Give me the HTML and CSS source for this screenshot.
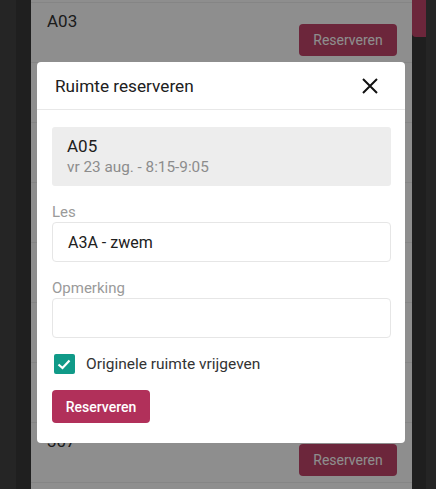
FILE: index.html
```html
<!DOCTYPE html>
<html lang="nl">
    <head>
        <meta charset="UTF-8">
        <meta name="viewport" content="width=device-width, initial-scale=1.0">
        <title>Ruimte reserveren</title>
        <link rel="stylesheet" href="styles.css">
    </head>
    <body>

        <div class="shell">
            <div class="side-strip"></div>
            <div class="gutter"></div>

            <!-- Lijst met ruimtes (achter de dialoog) -->
            <div class="page">
                <div class="room">
                    <span class="room-name">A03</span>
                    <button class="room-btn">Reserveren</button>
                </div>
                <!-- rijen die volledig achter de dialoog liggen -->
                <div class="room"></div>
                <div class="room"></div>
                <div class="room"></div>
                <div class="room"></div>
                <div class="room"></div>
                <div class="room"></div>
                <div class="room">
                    <span class="room-name">307</span>
                    <button class="room-btn">Reserveren</button>
                </div>
                <div class="room"></div>
            </div>

            <div class="gutter right">
                <div class="fab-edge"></div>
            </div>
            <div class="side-strip narrow"></div>
        </div>

        <!-- Dialoog -->
        <div class="backdrop">
            <div class="modal">
                <div class="modal-header">
                    <h2>Ruimte reserveren</h2>
                    <button class="close-btn" aria-label="Sluiten">
                        <svg width="20" height="20" viewBox="0 0 20 20">
                            <path d="M3 3 L17 17 M17 3 L3 17" stroke="#111" stroke-width="2" fill="none"/>
                        </svg>
                    </button>
                </div>
                <div class="modal-body">
                    <div class="slot">
                        <div class="slot-room">A05</div>
                        <div class="slot-time">vr 23 aug. - 8:15-9:05</div>
                    </div>

                    <label class="field-label">Les</label>
                    <div class="field">A3A - zwem</div>

                    <label class="field-label">Opmerking</label>
                    <div class="field"></div>

                    <div class="check-row">
                        <span class="checkbox">
                            <svg width="20" height="20" viewBox="0 0 20 20">
                                <path d="M4.5 10.5 L8.5 14 L15.5 6.5" stroke="#fff" stroke-width="2.2" fill="none"/>
                            </svg>
                        </span>
                        <span>Originele ruimte vrijgeven</span>
                    </div>

                    <button class="submit-btn">Reserveren</button>
                </div>
            </div>
        </div>

    </body>
</html>
```
FILE: styles.css
```css
body {
    margin: 0;
    padding: 0;
    font-family: Roboto, "Liberation Sans", sans-serif;
    height: 100vh;
    overflow: hidden;
    background-color: #444;
}

.shell {
    display: flex;
    height: 100vh;
}

.side-strip {
    width: 16px;
    background-color: #444;
}

.side-strip.narrow {
    width: 10px;
}

.gutter {
    width: 15px;
    background-color: #383838;
}

.gutter.right {
    width: 14px;
}

.fab-edge {
    height: 37px;
    background-color: #c2456a;
    border-bottom-left-radius: 4px;
}

.page {
    width: 381px;
    background-color: #fff;
    padding-top: 2px;
}

.room {
    height: 59px;
    border-top: 1px solid #efefef;
    padding: 0 15px 0 16px;
    display: flex;
    justify-content: space-between;
}

.room-name {
    margin-top: 7px;
    font-size: 17px;
    line-height: 22px;
    color: #333;
}

.room-btn {
    align-self: flex-end;
    margin-bottom: 6px;
    width: 98px;
    height: 32px;
    border: none;
    border-radius: 4px;
    background-color: #c2456a;
    color: #fff;
    font-family: inherit;
    font-size: 14px;
}

.backdrop {
    position: fixed;
    inset: 0;
    background-color: rgba(0, 0, 0, 0.443);
    padding: 62px 31px 0 37px;
}

.modal {
    background-color: #fff;
    border-radius: 4px;
}

.modal-header {
    height: 47px;
    border-bottom: 1px solid #e8e8e8;
    display: flex;
    align-items: center;
    justify-content: space-between;
    padding: 0 25px 0 18px;
}

.modal-header h2 {
    margin: 0;
    font-size: 17.2px;
    font-weight: 400;
    color: #202020;
}

.close-btn {
    border: none;
    background: none;
    padding: 0;
    width: 20px;
    height: 20px;
}

.close-btn svg {
    display: block;
}

.modal-body {
    padding: 17px 14px 20px 15px;
    display: flex;
    flex-direction: column;
}

.slot {
    background-color: #ededed;
    border-radius: 3px;
    padding: 8px 15px 9px;
}

.slot-room {
    font-size: 17px;
    line-height: 22px;
    color: #202020;
}

.slot-time {
    font-size: 15.3px;
    line-height: 20px;
    color: #8c8c8c;
}

.field-label {
    margin-top: 16px;
    font-size: 15px;
    line-height: 20px;
    color: #9a9a9a;
}

.field {
    height: 38px;
    border: 1px solid #e6e6e6;
    border-radius: 4px;
    padding: 0 15px;
    display: flex;
    align-items: center;
    font-size: 16px;
    color: #202020;
}

.check-row {
    margin-top: 16px;
    display: flex;
    align-items: center;
    gap: 11px;
    font-size: 15.5px;
    color: #333;
}

.checkbox {
    width: 21px;
    height: 20px;
    margin-left: 2px;
    background-color: #109a88;
    border-radius: 2px;
}

.checkbox svg {
    display: block;
}

.submit-btn {
    align-self: flex-start;
    margin-top: 16px;
    width: 98px;
    height: 33px;
    border: none;
    border-radius: 4px;
    background-color: #b1305a;
    color: #fff;
    font-family: inherit;
    font-size: 14px;
    font-weight: 500;
}
```
